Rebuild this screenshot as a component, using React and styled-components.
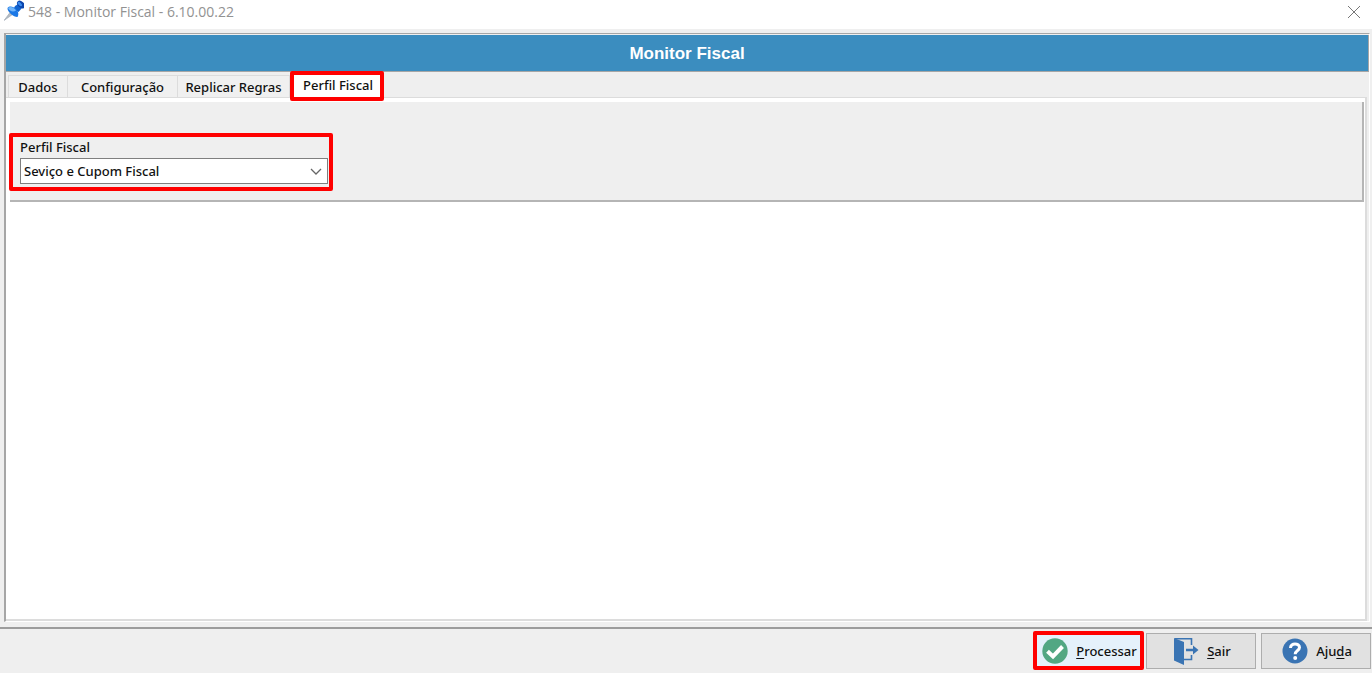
import React, { useState } from 'react'
import styled, { createGlobalStyle } from 'styled-components'

const tabs = [
  { name: 'Dados', width: 60 },
  { name: 'Configuração', width: 110 },
  { name: 'Replicar Regras', width: 112 },
  { name: 'Perfil Fiscal', width: 94 },
]

const App = () => {
  const [active, setActive] = useState('Perfil Fiscal')

  return (
    <Window>
      <Global />
      <TitleBar>
        <PinIcon />
        <h1>548 - Monitor Fiscal - 6.10.00.22</h1>
        <CloseButton aria-label="Fechar">
          <svg width="14" height="14" viewBox="0 0 14 14">
            <path d="M1 1L13 13M13 1L1 13" stroke="#777" strokeWidth="1" fill="none" />
          </svg>
        </CloseButton>
      </TitleBar>
      <Body>
        <Frame>
          <Banner>Monitor Fiscal</Banner>
          <TabList role="tablist">
            {tabs.map((tab) => (
              <Tab
                key={tab.name}
                role="tab"
                aria-selected={tab.name === active}
                $active={tab.name === active}
                $width={tab.width}
                onClick={() => setActive(tab.name)}
              >
                {tab.name}
              </Tab>
            ))}
          </TabList>
          <Page>
            <Panel>
              <Field>
                <label htmlFor="perfil">Perfil Fiscal</label>
                <SelectBox>
                  <select id="perfil">
                    <option>Seviço e Cupom Fiscal</option>
                  </select>
                  <svg width="12" height="8" viewBox="0 0 12 8">
                    <path d="M1 1L6 6L11 1" stroke="#666" strokeWidth="1.3" fill="none" />
                  </svg>
                </SelectBox>
              </Field>
            </Panel>
          </Page>
        </Frame>
      </Body>
      <Footer>
        <Action $marked>
          <CheckIcon />
          <span><u>P</u>rocessar</span>
        </Action>
        <Action>
          <ExitIcon />
          <span><u>S</u>air</span>
        </Action>
        <Action>
          <HelpIcon />
          <span>Aju<u>d</u>a</span>
        </Action>
      </Footer>
    </Window>
  )
}

const PinIcon = () => (
  <svg width="20" height="21" viewBox="0 0 20 21">
    <path d="M0 20.500L6 12.500L8.500 14.500Z" fill="#b4bcc4" stroke="#9aa5b0" strokeWidth="0.6" />
    <path d="M11 6L15 3.500L18 8L14.500 12L9.500 9Z" fill="#1264cf" />
    <path d="M3.500 8C5.500 5.500 9.500 6.500 12 9C14.500 11.500 15 14.500 13.500 17C10.500 17.500 3 12 3.500 8Z" fill="#1b78e6" />
    <path d="M4 8C6.500 6 10 7.500 12 10.500C9.500 12.500 5.500 11.500 4 8Z" fill="#71b6fa" />
    <ellipse cx="17" cy="4.500" rx="4.600" ry="3" transform="rotate(42 17 4.500)" fill="#0c46ae" />
    <ellipse cx="15.800" cy="4" rx="2.800" ry="1.400" transform="rotate(42 15.800 4)" fill="#3c8df0" />
  </svg>
)

const CheckIcon = () => (
  <svg width="26" height="26" viewBox="0 0 26 26">
    <circle cx="13" cy="13" r="12.700" fill="#52a783" />
    <path d="M5.500 13.200L11 18.500L20.500 8.500" stroke="#fff" strokeWidth="4" fill="none" />
  </svg>
)

const ExitIcon = () => (
  <svg width="26" height="28" viewBox="0 0 26 28">
    <path d="M1 1L11 5V28L1 23.500Z" fill="#3a74b3" />
    <path d="M2 1.800H18.500V8M18.500 18V22.500H11" stroke="#3a74b3" strokeWidth="1.600" fill="none" />
    <path d="M13 11.800H20V8.500L25.500 13L20 17.500V14.200H13Z" fill="#3a74b3" />
  </svg>
)

const HelpIcon = () => (
  <svg width="26" height="26" viewBox="0 0 26 26">
    <circle cx="13" cy="13" r="12.500" fill="#3a74b3" />
    <path d="M8.500 10C8.500 4.500 17.500 4.700 17.500 9.500C17.500 12.500 13.200 12.500 13.200 16.300" stroke="#fff" strokeWidth="3" fill="none" />
    <circle cx="13.200" cy="20" r="2" fill="#fff" />
  </svg>
)

export default App

const Global = createGlobalStyle`
*{
    box-sizing: border-box;
}
body{
    margin: 0;
    background-color: #efefef;
    color: #111;
    font-family: "Noto Sans", "Open Sans", sans-serif;
    font-size: 13px;
    font-weight: 500;
}
button, select{
    font: inherit;
    color: inherit;
}
`

const Window = styled.div`
width: 100%;
min-height: 100vh;
display: flex;
flex-direction: column;
`

const TitleBar = styled.header`
height: 29px;
display: flex;
align-items: flex-start;
padding: 0 11px 0 4px;
background-color: white;
h1{
    flex: 1;
    margin: 0 0 0 4px;
    font-family: "Open Sans", sans-serif;
    font-size: 14px;
    font-weight: 400;
    line-height: 24px;
    color: #929292;
}
`

const CloseButton = styled.button`
height: 24px;
display: flex;
align-items: center;
padding: 0;
border: none;
background: transparent;
`

const Body = styled.main`
flex: 1;
display: flex;
padding: 4px 2px 5px 4px;
`

const Frame = styled.section`
flex: 1;
display: flex;
flex-direction: column;
border: 1px solid #a6a6a6;
border-left-width: 2px;
border-right-color: #fff;
border-bottom-color: #fff;
`

const Banner = styled.h2`
margin: 1px 0 0;
padding-top: 2px;
border-right: 1px solid #a6a6a6;
border-bottom: 1px solid #a6a6a6;
background-color: #3b8dbf;
color: white;
font-family: "Liberation Sans", Arial, sans-serif;
font-size: 17px;
font-weight: 700;
line-height: 34px;
text-align: center;
`

const TabList = styled.div`
height: 25px;
display: flex;
align-items: flex-end;
padding-left: 2px;
`

const Tab = styled.button`
width: ${(props) => props.$width}px;
height: 22px;
padding: 0;
border: 1px solid #dcdcdc;
border-width: 1px 1px 0 0;
background-color: #f0f0f0;
line-height: 20px;
white-space: nowrap;
&:first-child{
    border-left-width: 1px;
}
${(props) => props.$active && `
    position: relative;
    z-index: 1;
    height: 30px;
    margin-bottom: -4px;
    padding: 0 0 3px 2px;
    border: 4px solid #f00;
    border-radius: 2px;
    background-color: white;
`}
`

const Page = styled.div`
flex: 1;
margin-right: 2px;
padding: 4px 1px 0 4px;
border: 1px solid #dcdcdc;
border-width: 1px 2px 2px 0;
background-color: white;
`

const Panel = styled.div`
height: 100px;
padding-top: 31px;
border: 2px solid #b5b5b5;
border-width: 0 2px 2px 0;
background-color: #efefef;
`

const Field = styled.div`
width: 324px;
height: 58px;
margin-left: -1px;
padding: 0 1px 0 7px;
border: 4px solid #f00;
border-radius: 2px;
label{
    display: block;
    line-height: 20px;
    margin-bottom: 1px;
}
`

const SelectBox = styled.div`
position: relative;
select{
    display: block;
    width: 100%;
    height: 26px;
    padding: 0 20px 0 3px;
    border: 1px solid #7f7f7f;
    border-radius: 0;
    background-color: white;
    appearance: none;
}
svg{
    position: absolute;
    top: 10px;
    right: 6px;
    pointer-events: none;
}
`

const Footer = styled.footer`
display: flex;
justify-content: flex-end;
align-items: center;
gap: 5px;
padding: 2px 1px 3px 0;
border-top: 2px solid #9c9c9c;
`

const Action = styled.button`
width: 110px;
height: 36px;
display: flex;
align-items: center;
justify-content: center;
gap: 8px;
padding: 0 0 0 2px;
border: 1px solid #adadad;
background-color: #e1e1e1;
u{
    text-underline-offset: 2px;
}
${(props) => props.$marked && `
    width: 111px;
    height: 39px;
    margin-right: -3px;
    border: 4px solid #f00;
    border-radius: 2px;
    background-color: #e5f1fb;
`}
`
